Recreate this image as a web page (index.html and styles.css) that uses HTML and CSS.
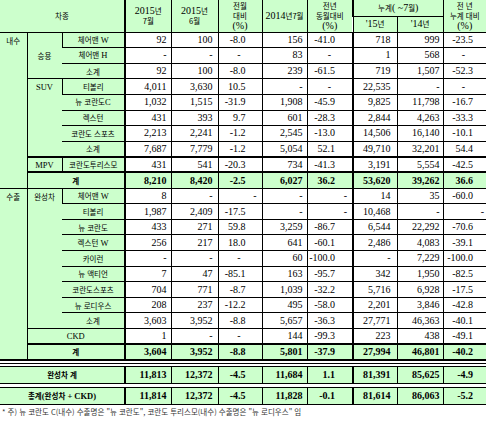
FILE: index.html
```html
<!DOCTYPE html>
<html lang="ko">
<head>
<meta charset="utf-8">
<link rel="stylesheet" href="styles.css">
</head>
<body>
<div class="sheet">
<table class="main">
<colgroup><col class="w0"><col class="w1"><col class="w2"><col class="w3"><col class="w4"><col class="w5"><col class="w6"><col class="w7"><col class="w8"><col class="w9"><col class="w10"></colgroup>
<thead>
<tr class="h1">
<th colspan="3" rowspan="2">차종</th>
<th rowspan="2" class="tk"><span class="l">2015</span>년<br>7월</th>
<th rowspan="2"><span class="l">2015</span>년<br>6월</th>
<th rowspan="2">전월<br>대비<br><span class="l">(%)</span></th>
<th rowspan="2"><span class="l">2014</span>년7월</th>
<th rowspan="2">전년<br>동월대비<br><span class="l">(%)</span></th>
<th colspan="2" class="tk">누계<span class="l">( ~7</span>월<span class="l">)</span></th>
<th rowspan="2">전 년<br>누계 대비<br><span class="l">(%)</span></th>
</tr>
<tr class="h2"><th class="tk"><span class="l">'15</span>년</th><th><span class="l">'14</span>년</th></tr>
</thead>
<tbody>
<tr><th rowspan="10" class="top">내수</th><th rowspan="3" class="sp">승용</th><th>체어맨 <span class="l">W</span></th><td>92</td><td>100</td><td>-8.0</td><td>156</td><td>-41.0</td><td>718</td><td>999</td><td>-23.5</td></tr>
<tr><th>체어맨 <span class="l">H</span></th><td>-</td><td>-</td><td class="d">-</td><td>83</td><td class="d">-</td><td>1</td><td>568</td><td class="d">-</td></tr>
<tr><th class="sub">소계</th><td>92</td><td>100</td><td>-8.0</td><td>239</td><td>-61.5</td><td>719</td><td>1,507</td><td>-52.3</td></tr>
<tr><th rowspan="5" class="sp top"><span class="l">SUV</span></th><th>티볼리</th><td>4,011</td><td>3,630</td><td>10.5</td><td>-</td><td class="d">-</td><td>22,535</td><td>-</td><td class="d">-</td></tr>
<tr><th>뉴 코란도<span class="l">C</span></th><td>1,032</td><td>1,515</td><td>-31.9</td><td>1,908</td><td>-45.9</td><td>9,825</td><td>11,798</td><td>-16.7</td></tr>
<tr><th>렉스턴</th><td>431</td><td>393</td><td>9.7</td><td>601</td><td>-28.3</td><td>2,844</td><td>4,263</td><td>-33.3</td></tr>
<tr><th>코란도 스포츠</th><td>2,213</td><td>2,241</td><td>-1.2</td><td>2,545</td><td>-13.0</td><td>14,506</td><td>16,140</td><td>-10.1</td></tr>
<tr><th class="sub">소계</th><td>7,687</td><td>7,779</td><td>-1.2</td><td>5,054</td><td>52.1</td><td>49,710</td><td>32,201</td><td>54.4</td></tr>
<tr class="tt"><th><span class="l">MPV</span></th><th>코란도투리스모</th><td>431</td><td>541</td><td>-20.3</td><td>734</td><td>-41.3</td><td>3,191</td><td>5,554</td><td>-42.5</td></tr>
<tr class="tt sum"><th colspan="2" class="b">계</th><td>8,210</td><td>8,420</td><td>-2.5</td><td>6,027</td><td>36.2</td><td>53,620</td><td>39,262</td><td>36.6</td></tr>
<tr><th rowspan="11" class="top">수출</th><th rowspan="9" class="sp top">완성차</th><th>체어맨 <span class="l">W</span></th><td>8</td><td>-</td><td class="e">-</td><td>-</td><td class="e">-</td><td>14</td><td>35</td><td>-60.0</td></tr>
<tr><th>티볼리</th><td>1,987</td><td>2,409</td><td>-17.5</td><td>-</td><td class="e">-</td><td>10,468</td><td>-</td><td class="e">-</td></tr>
<tr><th>뉴 코란도</th><td>433</td><td>271</td><td>59.8</td><td>3,259</td><td>-86.7</td><td>6,544</td><td>22,292</td><td>-70.6</td></tr>
<tr><th>렉스턴 <span class="l">W</span></th><td>256</td><td>217</td><td>18.0</td><td>641</td><td>-60.1</td><td>2,486</td><td>4,083</td><td>-39.1</td></tr>
<tr><th>카이런</th><td>-</td><td>-</td><td class="d">-</td><td>60</td><td>-100.0</td><td>-</td><td>7,229</td><td>-100.0</td></tr>
<tr><th>뉴 액티언</th><td>7</td><td>47</td><td>-85.1</td><td>163</td><td>-95.7</td><td>342</td><td>1,950</td><td>-82.5</td></tr>
<tr><th>코란도스포츠</th><td>704</td><td>771</td><td>-8.7</td><td>1,039</td><td>-32.2</td><td>5,716</td><td>6,928</td><td>-17.5</td></tr>
<tr><th>뉴 로디우스</th><td>208</td><td>237</td><td>-12.2</td><td>495</td><td>-58.0</td><td>2,201</td><td>3,846</td><td>-42.8</td></tr>
<tr><th class="sub">소계</th><td>3,603</td><td>3,952</td><td>-8.8</td><td>5,657</td><td>-36.3</td><td>27,771</td><td>46,363</td><td>-40.1</td></tr>
<tr><th colspan="2"><span class="l">CKD</span></th><td>1</td><td>-</td><td class="d">-</td><td>144</td><td>-99.3</td><td>223</td><td>438</td><td>-49.1</td></tr>
<tr class="tt sum"><th colspan="2" class="b">계</th><td>3,604</td><td>3,952</td><td>-8.8</td><td>5,801</td><td>-37.9</td><td>27,994</td><td>46,801</td><td>-40.2</td></tr>
</tbody>
</table>
<div class="sep"></div>
<table class="tot first">
<colgroup><col class="w0"><col class="w1"><col class="w2"><col class="w3"><col class="w4"><col class="w5"><col class="w6"><col class="w7"><col class="w8"><col class="w9"><col class="w10"></colgroup>
<tr><th colspan="3" class="b">완성차 계</th><td>11,813</td><td>12,372</td><td>-4.5</td><td>11,684</td><td>1.1</td><td>81,391</td><td>85,625</td><td>-4.9</td></tr>
</table>
<table class="tot second">
<colgroup><col class="w0"><col class="w1"><col class="w2"><col class="w3"><col class="w4"><col class="w5"><col class="w6"><col class="w7"><col class="w8"><col class="w9"><col class="w10"></colgroup>
<tr><th colspan="3" class="b">총계<span class="l">(</span>완성차<span class="l"> + CKD)</span></th><td>11,814</td><td>12,372</td><td>-4.5</td><td>11,828</td><td>-0.1</td><td>81,614</td><td>86,063</td><td>-5.2</td></tr>
</table>
<p class="note">* 주) 뉴 코란도 C(내수) 수출명은 "뉴 코란도", 코란도 투리스모(내수) 수출명은 "뉴 로디우스" 임</p>
</div>
</body>
</html>
```
FILE: styles.css
```css
html, body { margin: 0; padding: 0; background: #fff; }
.sheet { width: 486px; }
table { border-collapse: collapse; table-layout: fixed; width: 486px; }
.w0 { width: 27px; } .w1 { width: 35px; } .w2 { width: 63px; }
.w3 { width: 46px; } .w4 { width: 47px; } .w5 { width: 44px; }
.w6 { width: 45px; } .w7 { width: 46px; } .w8 { width: 44px; }
.w9 { width: 46px; } .w10 { width: 43px; }

th, td { border: 1px solid #000; padding: 0; overflow: hidden; white-space: nowrap; }
th {
  background: #ccffcc;
  font-family: "Noto Sans CJK KR", sans-serif;
  font-size: 7.5px;
  font-weight: normal;
  color: #000;
  text-align: center;
  vertical-align: middle;
  line-height: 9px;
}
td {
  font-family: "Liberation Serif", serif;
  font-size: 10px;
  line-height: 10px;
  color: #000;
  text-align: right;
  vertical-align: middle;
  background: #fff;
}
.l { font-family: "Liberation Serif", serif; font-size: 8.5px; }
thead tr { height: 16px; }
thead th { border-top: none; line-height: 9.6px; font-size: 7.5px; }
thead .l { font-size: 10px; }
.main { border-bottom: 2px solid #000; }
.main tr > *:first-child { border-left: none; }
.main tr > *:last-child { border-right: none; }
tbody tr { height: 15.62px; }

td:nth-last-child(8) { padding-right: 4px; border-left: 2px solid #000; }
td:nth-last-child(7) { padding-right: 5px; }
td:nth-last-child(6) { padding-right: 16px; }
td:nth-last-child(5) { padding-right: 4px; }
td:nth-last-child(4) { padding-right: 17px; }
td:nth-last-child(3) { padding-right: 6px; border-left: 2px solid #000; }
td:nth-last-child(2) { padding-right: 3px; }
td:nth-last-child(1) { padding-right: 13px; }
td.d { padding-right: 21px; }
td.e { padding-right: 5px; }
td:nth-last-child(1).e { padding-right: 2px; }
th.tk { border-left: 2px solid #000; }

.top { vertical-align: top; padding-top: 3px; }
.sp { border-right: none; }
.sub { border-left: none; }
tr.tt > * { border-top: 2px solid #000; }
tr.sum td { background: #ccffcc; font-weight: bold; }
.b { font-weight: bold; }

.sep { height: 1px; background: #000; margin-top: 2px; }
.tot { margin-top: 2px; }
.tot.second { margin-top: 3px; }
.tot tr { height: 17px; }
.tot th, .tot td { background: #ccffcc; }
.tot td { font-weight: bold; }
.tot tr > *:first-child { border-left: none; }
.tot tr > *:last-child { border-right: none; }

.note {
  margin: 1px 0 0 2px;
  font-family: "Noto Sans CJK KR", sans-serif;
  font-size: 7.5px;
  line-height: 12px;
  color: #333;
  white-space: nowrap;
}
```
